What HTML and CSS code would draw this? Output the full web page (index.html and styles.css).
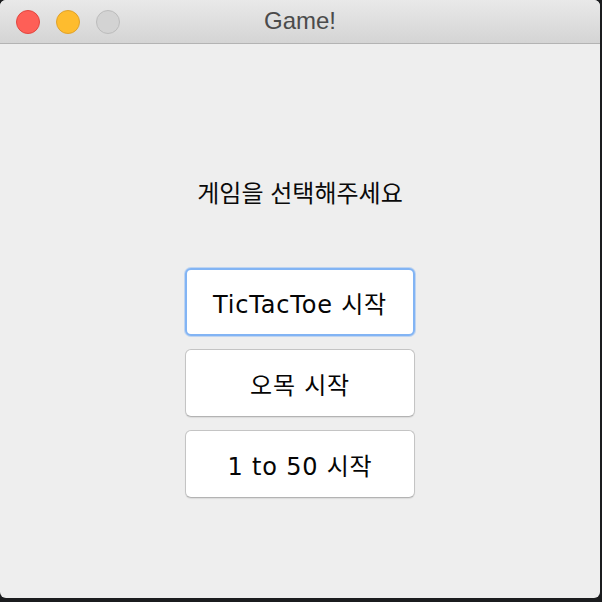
FILE: index.html
```html
<!DOCTYPE html>
<html lang="ko">
<head>
<meta charset="utf-8">
<title>Game!</title>
<link rel="stylesheet" href="styles.css">
</head>
<body>
<div class="window">
  <div class="titlebar">
    <div class="lights">
      <span class="light red"></span>
      <span class="light yellow"></span>
      <span class="light gray"></span>
    </div>
    <div class="title">Game!</div>
  </div>
  <div class="content">
    <div class="prompt">게임을 선택해주세요</div>
    <div class="buttons">
      <button class="btn focused">TicTacToe 시작</button>
      <button class="btn">오목 시작</button>
      <button class="btn">1 to 50 시작</button>
    </div>
  </div>
</div>
</body>
</html>
```
FILE: styles.css
```css
html, body {
  margin: 0;
  padding: 0;
  background: #1b1c1e;
  width: 602px;
  height: 602px;
  overflow: hidden;
}
.window {
  width: 600px;
  height: 598px;
  border-radius: 6px;
  overflow: hidden;
  background: #eeeeee;
  display: flex;
  flex-direction: column;
  font-family: "DejaVu Sans", "Noto Sans CJK KR", sans-serif;
}
.titlebar {
  height: 43px;
  border-bottom: 1px solid #b3b3b3;
  background: linear-gradient(#e9e9e9, #d4d4d4);
  position: relative;
  display: flex;
  align-items: center;
  justify-content: center;
}
.lights {
  position: absolute;
  left: 16px;
  top: 10px;
  display: flex;
  gap: 16px;
}
.light {
  width: 22px;
  height: 22px;
  border-radius: 50%;
  border: 1px solid;
}
.red { background: #fe5f57; border-color: #e2463f; }
.yellow { background: #febc2e; border-color: #e0a22b; }
.gray { background: #d3d3d3; border-color: #bcbcbc; }
.title {
  font-family: "Liberation Sans", "Noto Sans", sans-serif;
  font-size: 24px;
  color: #4b4b4b;
  margin-top: -1px;
}
.content {
  flex: 1;
  display: flex;
  flex-direction: column;
  align-items: center;
}
.prompt {
  margin-top: 133px;
  font-family: "Noto Sans CJK KR", sans-serif;
  font-size: 24px;
  line-height: 30px;
  color: #0a0a0a;
}
.buttons {
  margin-top: 61px;
  display: flex;
  flex-direction: column;
  gap: 13px;
}
.btn {
  width: 230px;
  height: 68px;
  background: #ffffff;
  border: 1px solid #c4c4c4;
  border-bottom-color: #b3b3b3;
  border-radius: 6px;
  font-family: "DejaVu Sans", "Noto Sans CJK KR", sans-serif;
  font-size: 24px;
  letter-spacing: 0.8px;
  color: #050505;
  padding: 0;
  box-shadow: 0 1px 1px rgba(0,0,0,0.08);
}
.btn.focused {
  border: 2px solid #82b4f4;
  box-shadow: 0 0 0 1px rgba(130,180,244,0.45);
}
```
